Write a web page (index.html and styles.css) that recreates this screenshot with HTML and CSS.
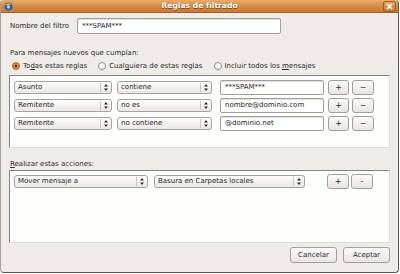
FILE: index.html
```html
<!DOCTYPE html>
<html lang="es">
<head>
<meta charset="utf-8">
<title>Reglas de filtrado</title>
<link rel="stylesheet" href="styles.css">
</head>
<body>
<div class="win">
  <div class="titlebar">
    <span class="appicon"><svg width="9" height="9" viewBox="0 0 9 9"><circle cx="4.5" cy="4.5" r="4" fill="#2a5ea8"/><path d="M1 3.5 C2 1 6 0.5 8 3 C7 2.5 5 2.6 4.5 4.2 C3.5 3 2 3 1 3.5Z" fill="#f0b040"/><circle cx="4.5" cy="5" r="1.6" fill="#bcd3f0"/></svg></span>
    <span class="title">Reglas de filtrado</span>
    <span class="close"><svg width="7" height="7" viewBox="0 0 7 7"><path d="M1 1 L6 6 M6 1 L1 6" stroke="#fff" stroke-width="1.6"/></svg></span>
  </div>
  <div class="content">
    <div class="namerow">
      <span class="lbl">Nombre del filtro</span>
      <div class="entry name">***SPAM***</div>
    </div>
    <div class="section">Para mensajes nuevos que cumplan:</div>
    <div class="radios">
      <span class="radio on"></span><span class="rtext">To<u>d</u>as estas reglas</span>
      <span class="radio"></span><span class="rtext">Cual<u>q</u>uiera de estas reglas</span>
      <span class="radio"></span><span class="rtext">Incluir todos los <u>m</u>ensajes</span>
    </div>
    <div class="list rules">
      <div class="row">
        <div class="select s1"><span class="stext">Asunto</span><span class="sarrow"><svg width="4" height="7" viewBox="0 0 4 7"><path d="M2 0 L4 2.6 H0Z M2 7 L4 4.4 H0Z" fill="#333"/></svg></span></div>
        <div class="select s2"><span class="stext">contiene</span><span class="sarrow"><svg width="4" height="7" viewBox="0 0 4 7"><path d="M2 0 L4 2.6 H0Z M2 7 L4 4.4 H0Z" fill="#333"/></svg></span></div>
        <div class="entry val">***SPAM***</div>
        <div class="btn sq plus">+</div>
        <div class="btn sq minus">−</div>
      </div>
      <div class="row">
        <div class="select s1"><span class="stext">Remitente</span><span class="sarrow"><svg width="4" height="7" viewBox="0 0 4 7"><path d="M2 0 L4 2.6 H0Z M2 7 L4 4.4 H0Z" fill="#333"/></svg></span></div>
        <div class="select s2"><span class="stext">no es</span><span class="sarrow"><svg width="4" height="7" viewBox="0 0 4 7"><path d="M2 0 L4 2.6 H0Z M2 7 L4 4.4 H0Z" fill="#333"/></svg></span></div>
        <div class="entry val">nombre@dominio.com</div>
        <div class="btn sq plus">+</div>
        <div class="btn sq minus">−</div>
      </div>
      <div class="row">
        <div class="select s1"><span class="stext">Remitente</span><span class="sarrow"><svg width="4" height="7" viewBox="0 0 4 7"><path d="M2 0 L4 2.6 H0Z M2 7 L4 4.4 H0Z" fill="#333"/></svg></span></div>
        <div class="select s2"><span class="stext">no contiene</span><span class="sarrow"><svg width="4" height="7" viewBox="0 0 4 7"><path d="M2 0 L4 2.6 H0Z M2 7 L4 4.4 H0Z" fill="#333"/></svg></span></div>
        <div class="entry val">@dominio.net</div>
        <div class="btn sq plus">+</div>
        <div class="btn sq minus">−</div>
      </div>
    </div>
    <div class="section sec2"><u>R</u>ealizar estas acciones:</div>
    <div class="list actions">
      <div class="row arow">
        <div class="select a1"><span class="stext">Mover mensaje a</span><span class="sarrow"><svg width="4" height="7" viewBox="0 0 4 7"><path d="M2 0 L4 2.6 H0Z M2 7 L4 4.4 H0Z" fill="#333"/></svg></span></div>
        <div class="select a2"><span class="stext">Basura en Carpetas locales</span><span class="sarrow"><svg width="4" height="7" viewBox="0 0 4 7"><path d="M2 0 L4 2.6 H0Z M2 7 L4 4.4 H0Z" fill="#333"/></svg></span></div>
        <div class="btn sq plus aplus">+</div>
        <div class="btn sq minus">-</div>
      </div>
    </div>
    <div class="footer">
      <div class="btn dlg">Cancelar</div>
      <div class="btn dlg">Aceptar</div>
    </div>
  </div>
</div>
</body>
</html>
```

FILE: styles.css
```css
* { box-sizing: border-box; }
html, body { margin: 0; padding: 0; background: #ffffff; }
body {
  font-family: "DejaVu Sans", "Liberation Sans", sans-serif;
  font-size: 7px;
  color: #2b2b2b;
}
.win {
  width: 399px;
  height: 273px;
  background: #efebe7;
  border-left: 1px solid #a8a39e;
  border-right: 1px solid #5c5955;
  border-bottom: 1px solid #5c5955;
  border-radius: 3px 3px 4px 4px;
  overflow: hidden;
  display: flex;
  flex-direction: column;
}
.titlebar {
  height: 13px;
  flex: none;
  display: grid;
  grid-template-columns: 1fr auto 1fr;
  align-items: center;
  background: linear-gradient(#e9ad6b, #d48a43 55%, #c97a33);
  border-bottom: 1px solid #a86026;
  padding: 0 2px 0 2px;
}
.appicon { justify-self: start; display: flex; margin-left: 1px; }
.title {
  font-weight: bold;
  font-size: 7.6px;
  color: #ffffff;
  text-shadow: 0 1px 0 #7a4a1c, 0 0 1px #8a5520;
  line-height: 12px;
}
.close {
  justify-self: end;
  width: 13px;
  height: 11px;
  border: 1px solid #9c5f28;
  border-radius: 2px;
  background: linear-gradient(#e4a562, #c67a36);
  display: flex;
  align-items: center;
  justify-content: center;
}
.content {
  flex: 1;
  display: flex;
  flex-direction: column;
  padding: 5px 8px 0 8px;
}
.namerow {
  display: flex;
  align-items: center;
  height: 16px;
}
.lbl { width: 68px; padding-left: 1px; line-height: 10px; }
.entry {
  background: #ffffff;
  border: 1px solid #a29d97;
  border-radius: 2px;
  height: 15px;
  line-height: 13px;
  padding-left: 4px;
  color: #1e1e1e;
  box-shadow: inset 0 1px 0 #e4e1dd;
  white-space: nowrap;
  overflow: hidden;
}
.entry.name { width: 204px; height: 16px; line-height: 14px; }
.section { margin-top: 14px; line-height: 10px; padding-left: 1px; }
.radios {
  margin-top: 3px;
  height: 10px;
  display: flex;
  align-items: center;
  padding-left: 3px;
}
.radio {
  width: 8px;
  height: 8px;
  border-radius: 50%;
  border: 1px solid #8c877f;
  background: #fcfbfa;
  flex: none;
  margin-right: 3px;
}
.radio.on {
  background: radial-gradient(circle, #3a2a1c 0 1.3px, #e88a3a 1.6px);
  border-color: #b0621f;
}
.rtext { margin-right: 11px; }
.list {
  width: 381px;
  background: #fefefd;
  border-top: 1px solid #878380;
  border-left: 1px solid #878380;
  border-right: 1px solid #dfdbd6;
  border-bottom: 1px solid #dfdbd6;
  padding-left: 4px;
}
.rules { margin-top: 4px; height: 73px; padding-top: 2px; }
.row {
  height: 18px;
  display: flex;
  align-items: center;
}
.select {
  height: 13px;
  border: 1px solid #a6a19b;
  border-radius: 3px;
  background: linear-gradient(#fdfdfc, #ebe8e4);
  display: flex;
  align-items: center;
  color: #1e1e1e;
  flex: none;
}
.stext { flex: 1; padding-left: 3px; line-height: 11px; white-space: nowrap; overflow: hidden; }
.sarrow {
  width: 11px;
  height: 9px;
  border-left: 1px solid #c9c5c0;
  display: flex;
  align-items: center;
  justify-content: center;
}
.s1 { width: 98px; margin-right: 5px; }
.s2 { width: 95px; margin-right: 8px; }
.entry.val { width: 104px; margin-right: 4px; }
.btn {
  border: 1px solid #a39e98;
  border-radius: 3px;
  background: linear-gradient(#fbfaf9, #e8e5e1);
  display: flex;
  align-items: center;
  justify-content: center;
  color: #2b2b2b;
  flex: none;
}
.sq { width: 21px; height: 15px; font-size: 8px; }
.plus { margin-right: 3px; }
.minus { width: 22px; color: #444; }
.sec2 { margin-top: 11px; }
.actions { margin-top: 1px; height: 73px; padding-top: 1px; }
.a1 { width: 134px; margin-right: 6px; }
.a2 { width: 151px; margin-right: 22px; }
.aplus { width: 22px; margin-right: 2px; }
.footer {
  margin-top: 4px;
  width: 381px;
  display: flex;
  justify-content: flex-end;
  gap: 6px;
}
.dlg { width: 47px; height: 16px; padding-bottom: 1px; }
```
